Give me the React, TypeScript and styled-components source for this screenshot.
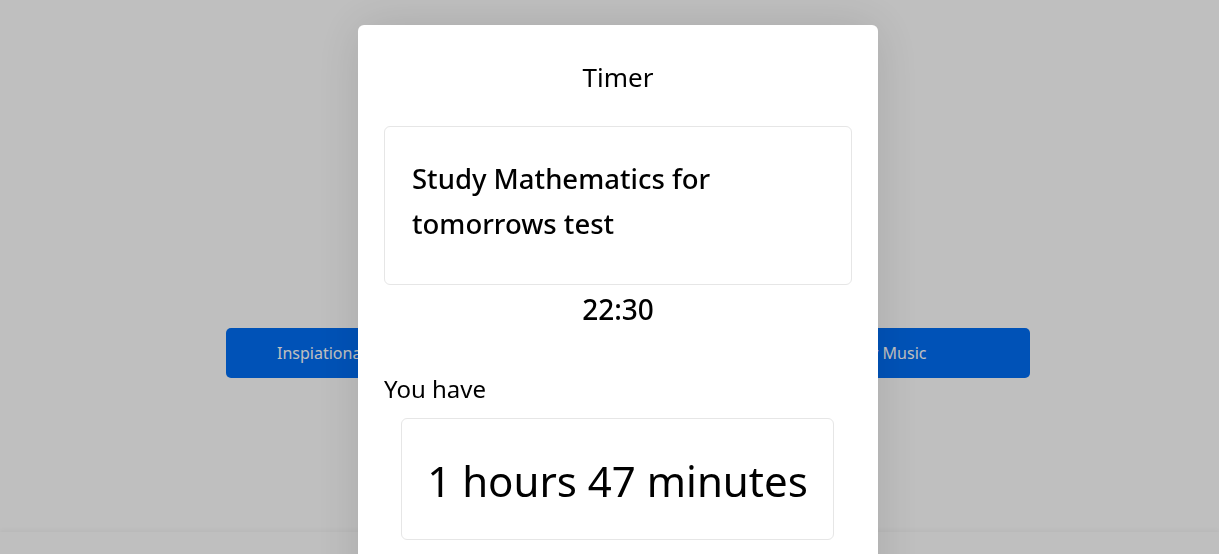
import { createGlobalStyle, styled } from "styled-components";

const GlobalStyle = createGlobalStyle`
  body {
    margin: 0;
    background: #ffffff;
    font-family: "Noto Sans", "Open Sans", sans-serif;
    color: #000;
  }
  * {
    box-sizing: border-box;
  }
`;

const links = ["Inspiational Quotes", "Timer", "Study Music"];

const App = () => {
  return (
    <>
      <GlobalStyle />
      <PageStyled>
        <BtnGroupStyled>
          {links.map((text) => (
            <NavBtnStyled key={text}>{text}</NavBtnStyled>
          ))}
        </BtnGroupStyled>
        <LowerSectionStyled />
      </PageStyled>
      <OverlayStyled>
        <ModalStyled>
          <TitleStyled>Timer</TitleStyled>
          <TaskCardStyled>Study Mathematics for tomorrows test</TaskCardStyled>
          <ClockStyled>22:30</ClockStyled>
          <LabelStyled>You have</LabelStyled>
          <RemainCardStyled>1 hours 47 minutes</RemainCardStyled>
        </ModalStyled>
      </OverlayStyled>
    </>
  );
};

const PageStyled = styled.div`
  min-height: 100vh;
  display: flex;
  flex-direction: column;
  padding-top: 328px;
`;

const BtnGroupStyled = styled.div`
  display: flex;
  width: 804px;
  margin-left: 226px;
  height: 50px;
`;

const NavBtnStyled = styled.button`
  flex: 0 0 268px;
  border: none;
  background: #006ef5;
  color: #ffffff;
  font-family: inherit;
  font-size: 16px;
  padding: 0 0 0 14px;
  text-align: left;
  &:first-child {
    border-radius: 5px 0 0 5px;
    padding-left: 51px;
  }
  &:last-child {
    border-radius: 0 5px 5px 0;
    padding-left: 74px;
  }
`;

const LowerSectionStyled = styled.div`
  margin-top: 154px;
  height: 60px;
  box-shadow: 0 -2px 4px rgba(0, 0, 0, 0.04);
`;

const OverlayStyled = styled.div`
  position: fixed;
  inset: 0;
  background: rgba(0, 0, 0, 0.25);
  display: flex;
  justify-content: center;
  align-items: flex-start;
  padding-top: 25px;
  overflow: hidden;
`;

const ModalStyled = styled.div`
  width: 520px;
  margin-left: 17px;
  min-height: 600px;
  background: #ffffff;
  border-radius: 6px;
  box-shadow: 0 0 50px rgba(0, 0, 0, 0.12);
  padding: 37px 26px 0;
  display: flex;
  flex-direction: column;
`;

const TitleStyled = styled.h2`
  margin: 0;
  font-size: 26px;
  font-weight: 400;
  line-height: 31px;
  text-align: center;
`;

const TaskCardStyled = styled.div`
  margin-top: 33px;
  height: 159px;
  border: 1px solid #e6e6e6;
  border-radius: 6px;
  padding: 29px 120px 0 27px;
  font-size: 27.5px;
  line-height: 45px;
  font-weight: 500;
`;

const ClockStyled = styled.div`
  margin-top: 7px;
  font-size: 28px;
  line-height: 34px;
  font-weight: 500;
  text-align: center;
`;

const LabelStyled = styled.div`
  margin-top: 48px;
  font-size: 24px;
  line-height: 29px;
`;

const RemainCardStyled = styled.div`
  margin: 15px 18px 0 17px;
  height: 122px;
  border: 1px solid #e6e6e6;
  border-radius: 6px;
  display: flex;
  align-items: center;
  justify-content: center;
  padding-top: 3px;
  font-size: 42px;
  font-weight: 400;
`;

export default App;
